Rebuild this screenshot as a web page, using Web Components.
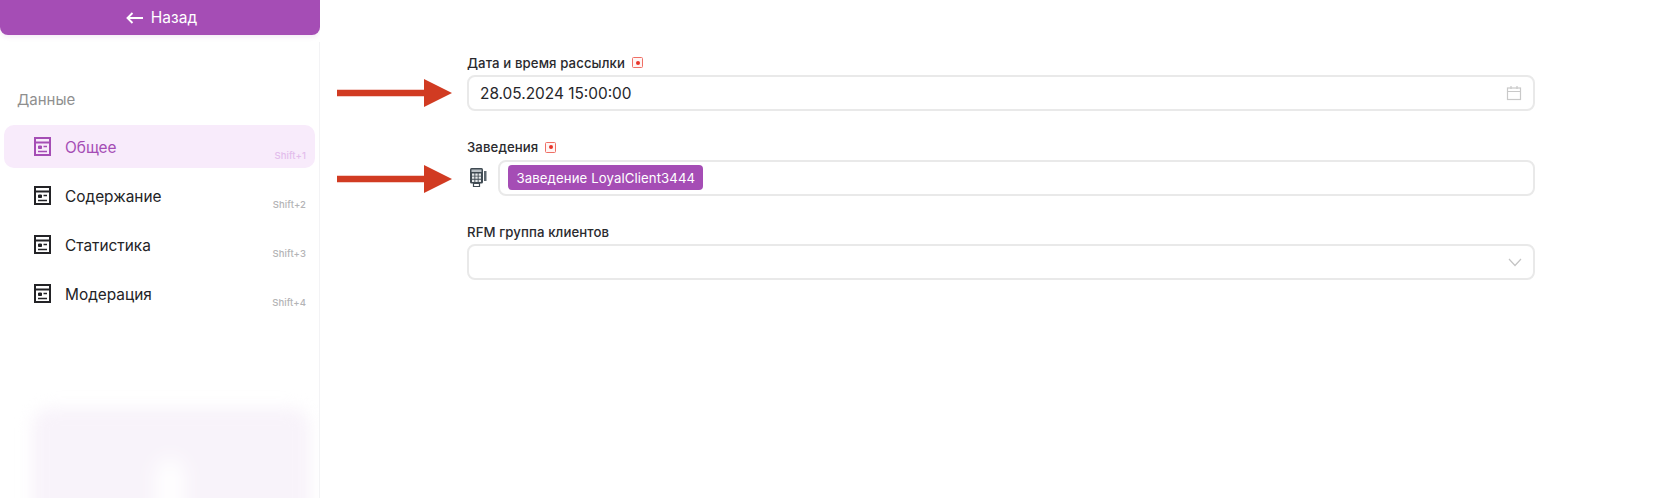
<!DOCTYPE html>
<html lang="ru">
<head>
<meta charset="utf-8">
<title>Рассылка</title>
<style>
  html, body { margin: 0; background: #fff; height: 498px; overflow: hidden; }
  body { font-family: Inter, "Liberation Sans", sans-serif; color: #1f1f24; }
</style>
</head>
<body>
<app-shell>
  <side-bar slot="side">
    <nav-item active shortcut="Shift+1">Общее</nav-item>
    <nav-item shortcut="Shift+2">Содержание</nav-item>
    <nav-item shortcut="Shift+3">Статистика</nav-item>
    <nav-item shortcut="Shift+4">Модерация</nav-item>
  </side-bar>
  <form-field label="Дата и время рассылки" required>
    <text-box icon="calendar"><span class="value">28.05.2024 15:00:00</span></text-box>
  </form-field>
  <form-field label="Заведения" required terminal>
    <text-box><tag-chip>Заведение LoyalClient3444</tag-chip></text-box>
  </form-field>
  <form-field label="RFM группа клиентов">
    <text-box icon="chevron"></text-box>
  </form-field>
  <red-arrow style="top: 79px"></red-arrow>
  <red-arrow style="top: 165px"></red-arrow>
</app-shell>

<script>
const cardIcon = `
  <svg width="17" height="19" viewBox="0 0 17 19" fill="none" stroke="currentColor" stroke-width="2">
    <rect x="1" y="1" width="15" height="17"/>
    <path d="M1 5.5h15"/>
    <path d="M4.5 9h3v2.5h-3z" fill="currentColor" stroke-width="1"/>
    <path d="M9.5 9.5h3.5M4 14.5h9" stroke-width="1.4"/>
  </svg>`;

class AppShell extends HTMLElement {
  constructor() {
    super();
    this.attachShadow({mode: 'open'}).innerHTML = `
      <style>
        :host { display: grid; grid-template-columns: 320px 1068px; column-gap: 147px; height: 498px; position: relative; overflow: hidden; }
        main { display: flex; flex-direction: column; gap: 27.5px; padding-top: 54px; }
      </style>
      <slot name="side"></slot>
      <main><slot></slot></main>
    `;
  }
}

class SideBar extends HTMLElement {
  constructor() {
    super();
    this.attachShadow({mode: 'open'}).innerHTML = `
      <style>
        :host { display: flex; flex-direction: column; height: 498px; overflow: hidden; position: relative; }
        button {
          display: flex; align-items: center; justify-content: center; gap: 8px;
          height: 35px; width: 320px; flex: none; padding: 0 0 0 3px; margin: 0; border: 0;
          border-radius: 0 0 8px 8px; background: #a54db5; color: #fff;
          font: 400 15.5px Inter, "Liberation Sans", sans-serif;
          box-shadow: 0 2px 5px rgba(165, 77, 181, .12);
        }
        .rail { position: absolute; top: 42px; bottom: 0; right: 0; width: 1px; background: #f3f3f5; }
        h3 { margin: 54px 0 0 17px; font: 400 15px/22px Inter, "Liberation Sans", sans-serif; color: #8f8f8f; }
        .items { display: flex; flex-direction: column; gap: 6px; margin: 14px 5px 0 4px; }
        .promo {
          position: absolute; left: 32px; top: 408px; width: 278px; height: 130px; border-radius: 18px;
          background: #f8f3fa; filter: blur(8px); overflow: hidden;
        }
        .promo i { position: absolute; left: 124px; top: 50px; width: 28px; height: 60px; border-radius: 14px; background: #fff; filter: blur(7px); }
      </style>
      <button><svg width="17" height="12" viewBox="0 0 17 12" fill="none" stroke="#fff" stroke-width="1.9"><path d="M17 6H1.5M6.5 1 1.5 6l5 5"/></svg>Назад</button>
      <h3>Данные</h3>
      <div class="items"><slot></slot></div>
      <div class="promo"><i></i></div>
      <div class="rail"></div>
    `;
  }
}

class NavItem extends HTMLElement {
  constructor() {
    super();
    const sc = this.getAttribute('shortcut') || '';
    this.attachShadow({mode: 'open'}).innerHTML = `
      <style>
        :host { display: flex; align-items: center; height: 43px; padding-left: 30px; border-radius: 10px; position: relative; color: #232326; font-size: 15.4px; }
        :host([active]) { background: #f8ebfb; color: #a54db5; }
        svg { flex: none; margin-right: 14px; }
        span { padding-top: 1px; }
        small { position: absolute; right: 9px; bottom: 7px; font-size: 9.5px; font-weight: 500; color: #b4b4b6; letter-spacing: .1px; }
        :host([active]) small { color: #e3bdec; }
      </style>
      ${cardIcon}<span><slot></slot></span><small>${sc}</small>
    `;
  }
}

class FormField extends HTMLElement {
  constructor() {
    super();
    const label = this.getAttribute('label');
    const star = this.hasAttribute('required') ? '<span class="req"><i></i></span>' : '';
    const terminal = this.hasAttribute('terminal') ? `
      <svg class="pos" width="18" height="19" viewBox="0 0 18 19">
        <rect x="1" y="0" width="13" height="15.5" rx="1.5" fill="#3f4a52"/>
        <rect x="2.5" y="1.5" width="10" height="2.5" fill="#b9c0c5"/>
        <path d="M3 5.5h2.4v2.2H3zM6.3 5.5h2.4v2.2H6.3zM9.6 5.5H12v2.2H9.6zM3 8.6h2.4v2.2H3zM6.3 8.6h2.4v2.2H6.3zM9.6 8.6H12v2.2H9.6zM3 11.7h2.4v2.2H3zM6.3 11.7h2.4v2.2H6.3zM9.6 11.7H12v2.2H9.6z" fill="#e6e9eb"/>
        <rect x="15" y="3" width="2.5" height="10" fill="#5c666e"/>
        <path d="M4.5 15.5h6v3h-6z" fill="none" stroke="#3f4a52" stroke-width="1.2"/>
      </svg>` : '';
    this.attachShadow({mode: 'open'}).innerHTML = `
      <style>
        :host { display: block; }
        label { display: flex; align-items: center; gap: 7px; height: 17px; margin-bottom: 4px; font-size: 13.2px; font-weight: 500; color: #2a2a2e; letter-spacing: .1px; }
        .req { display: inline-flex; align-items: center; justify-content: center; box-sizing: border-box; width: 11px; height: 11px; border: 1.5px solid #ef6f65; border-radius: 1.5px; background: #fff5f4; }
        .req i { width: 4px; height: 4px; border-radius: 50%; background: #e8352a; }
        .row { display: flex; align-items: center; gap: 11px; }
        .pos { flex: none; margin-left: 2px; margin-bottom: 1px; }
        ::slotted(text-box) { flex: 1; }
      </style>
      <label>${label}${star}</label>
      <div class="row">${terminal}<slot></slot></div>
    `;
  }
}

class TextBox extends HTMLElement {
  constructor() {
    super();
    const icons = {
      calendar: `<svg width="16" height="16" viewBox="0 0 16 16" fill="none" stroke="#c9c9c9" stroke-width="1.2"><rect x="1.5" y="3" width="13" height="11.5"/><path d="M1.5 6.5h13M5 1v3M11 1v3"/></svg>`,
      chevron: `<svg width="14" height="9" viewBox="0 0 14 9" fill="none" stroke="#c4c4c4" stroke-width="1.2"><path d="M1 1l6 6.5L13 1"/></svg>`
    };
    const icon = icons[this.getAttribute('icon')] || '';
    this.attachShadow({mode: 'open'}).innerHTML = `
      <style>
        :host { display: flex; align-items: center; box-sizing: border-box; height: 36px; padding: 0 11px 0 8px; border: 2px solid #e9e9e9; border-radius: 8px; background: #fff; }
        ::slotted(.value) { font-size: 15.4px; color: #26262a; padding-left: 3px; }
        .end { display: flex; margin-left: auto; }
      </style>
      <slot></slot><span class="end">${icon}</span>
    `;
  }
}

class TagChip extends HTMLElement {
  constructor() {
    super();
    this.attachShadow({mode: 'open'}).innerHTML = `
      <style>
        :host { display: inline-flex; align-items: center; height: 25px; padding: 0 8px 0 8.5px; border-radius: 4px; background: #a54db5; color: #fff; font-size: 13.2px; letter-spacing: .1px; white-space: nowrap; }
      </style>
      <slot></slot>
    `;
  }
}

class RedArrow extends HTMLElement {
  constructor() {
    super();
    this.attachShadow({mode: 'open'}).innerHTML = `
      <style>
        :host { display: block; position: absolute; left: 337px; width: 116px; height: 28px; }
        svg { display: block; }
      </style>
      <svg width="116" height="28" viewBox="0 0 116 28"><path d="M0 10.75H87V0l28 14-28 14V17.25H0z" fill="#d13b22"/></svg>
    `;
  }
}

customElements.define('app-shell', AppShell);
customElements.define('side-bar', SideBar);
customElements.define('nav-item', NavItem);
customElements.define('form-field', FormField);
customElements.define('text-box', TextBox);
customElements.define('tag-chip', TagChip);
customElements.define('red-arrow', RedArrow);
</script>
</body>
</html>
